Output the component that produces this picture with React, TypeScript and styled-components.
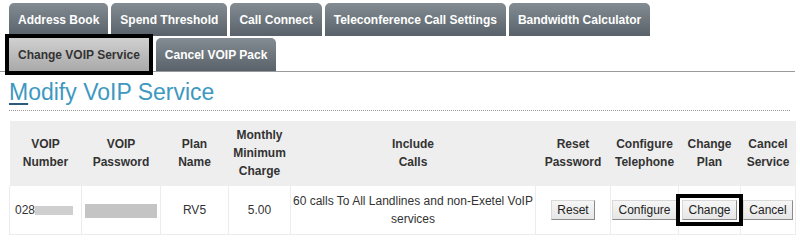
import * as React from 'react'
import styled, { createGlobalStyle } from 'styled-components'

const GlobalStyle = createGlobalStyle`
  body {
    margin: 0;
    background: #fff;
    font-family: 'Liberation Sans', Arial, sans-serif;
    color: #333;
  }
`

const Page = styled.div`
  width: 795px;
`

const TabBar = styled.div`
  display: flex;
  flex-direction: column;
  gap: 2px;
  padding: 3px 0 0 9px;
  border-bottom: 1px solid #9a9a9a;
`

const TabRow = styled.div`
  display: flex;
  gap: 3px;
`

const Tab = styled.div<{ $active?: boolean }>`
  height: 33px;
  display: flex;
  align-items: center;
  padding: 0 9px;
  border-radius: 5px 5px 0 0;
  font-size: 12px;
  font-weight: bold;
  white-space: nowrap;
  color: ${p => (p.$active ? '#333' : '#fff')};
  background: ${p =>
    p.$active
      ? 'linear-gradient(#d0d0d0, #a9a9a9)'
      : 'linear-gradient(#838c92, #59626a)'};
  ${p =>
    p.$active &&
    `
    outline: 4px solid #000;
    outline-offset: 0;
    margin-right: 4px;
    border-radius: 0;
  `}
`

const Heading = styled.h1`
  margin: 0 0 0 9px;
  padding-top: 4px;
  font-size: 23px;
  font-weight: normal;
  line-height: 32px;
  color: #3e98bf;
  width: 781px;
  border-bottom: 1px dotted #999;
  padding-bottom: 2px;

  span {
    text-decoration: underline;
    text-decoration-color: #2c5a7a;
    text-underline-offset: 3px;
  }
`

const Table = styled.table`
  margin: 10px 0 0 9px;
  width: 786px;
  border-collapse: collapse;
  table-layout: fixed;
  font-size: 12px;

  th,
  td {
    box-sizing: border-box;
  }
`

const HeadCell = styled.th<{ $w: number }>`
  width: ${p => p.$w}px;
  background: #eeeeee;
  font-weight: bold;
  line-height: 18px;
  padding: 5px 0 6px;
  text-align: center;
  vertical-align: middle;
  color: #333;
`

const Cell = styled.td<{ $left?: boolean }>`
  border: 1px solid #ececec;
  border-top: none;
  line-height: 18px;
  padding: 6px ${p => (p.$left ? '5px' : '1px')};
  height: 48px;
  text-align: ${p => (p.$left ? 'left' : 'center')};
  vertical-align: middle;
  color: #333;
`

const Masked = styled.span<{ $w: number }>`
  display: inline-block;
  width: ${p => p.$w}px;
  height: 14px;
  vertical-align: middle;
  background: #c4c4c4;
`

const NumberMask = styled.span`
  display: inline-block;
  width: 38px;
  height: 9px;
  vertical-align: middle;
  background: #cfcfcf;
  filter: blur(0.6px);
`

const Button = styled.button<{ $highlight?: boolean }>`
  font-family: 'Liberation Sans', Arial, sans-serif;
  font-size: 12px;
  color: #222;
  height: 20px;
  padding: 0 5px;
  background: linear-gradient(#f6f6f6, #e6e6e6);
  border: 1px solid #d8d8d8;
  border-right-color: #8a8a8a;
  border-bottom-color: #8a8a8a;
  ${p =>
    p.$highlight &&
    `
    outline: 4px solid #000;
    outline-offset: 2px;
  `}
`

const columns = [
  { w: 72, label: ['VOIP', 'Number'] },
  { w: 79, label: ['VOIP', 'Password'] },
  { w: 68, label: ['Plan', 'Name'] },
  { w: 62, label: ['Monthly', 'Minimum', 'Charge'] },
  { w: 245, label: ['Include', 'Calls'] },
  { w: 75, label: ['Reset', 'Password'] },
  { w: 68, label: ['Configure', 'Telephone'] },
  { w: 62, label: ['Change', 'Plan'] },
  { w: 55, label: ['Cancel', 'Service'] },
]

export default function App() {
  return (
    <Page>
      <GlobalStyle />
      <TabBar>
        <TabRow>
          <Tab>Address Book</Tab>
          <Tab>Spend Threshold</Tab>
          <Tab>Call Connect</Tab>
          <Tab>Teleconference Call Settings</Tab>
          <Tab>Bandwidth Calculator</Tab>
        </TabRow>
        <TabRow>
          <Tab $active>Change VOIP Service</Tab>
          <Tab>Cancel VOIP Pack</Tab>
        </TabRow>
      </TabBar>
      <Heading>
        <span>M</span>odify VoIP Service
      </Heading>
      <Table>
        <thead>
          <tr>
            {columns.map(c => (
              <HeadCell key={c.label.join(' ')} $w={c.w}>
                {c.label.map((l, i) => (
                  <React.Fragment key={l}>
                    {i > 0 && <br />}
                    {l}
                  </React.Fragment>
                ))}
              </HeadCell>
            ))}
          </tr>
        </thead>
        <tbody>
          <tr>
            <Cell $left>
              028
              <NumberMask />
            </Cell>
            <Cell>
              <Masked $w={72} />
            </Cell>
            <Cell>RV5</Cell>
            <Cell>5.00</Cell>
            <Cell>60 calls To All Landlines and non-Exetel VoIP services</Cell>
            <Cell>
              <Button>Reset</Button>
            </Cell>
            <Cell>
              <Button>Configure</Button>
            </Cell>
            <Cell>
              <Button $highlight>Change</Button>
            </Cell>
            <Cell>
              <Button>Cancel</Button>
            </Cell>
          </tr>
        </tbody>
      </Table>
    </Page>
  )
}
